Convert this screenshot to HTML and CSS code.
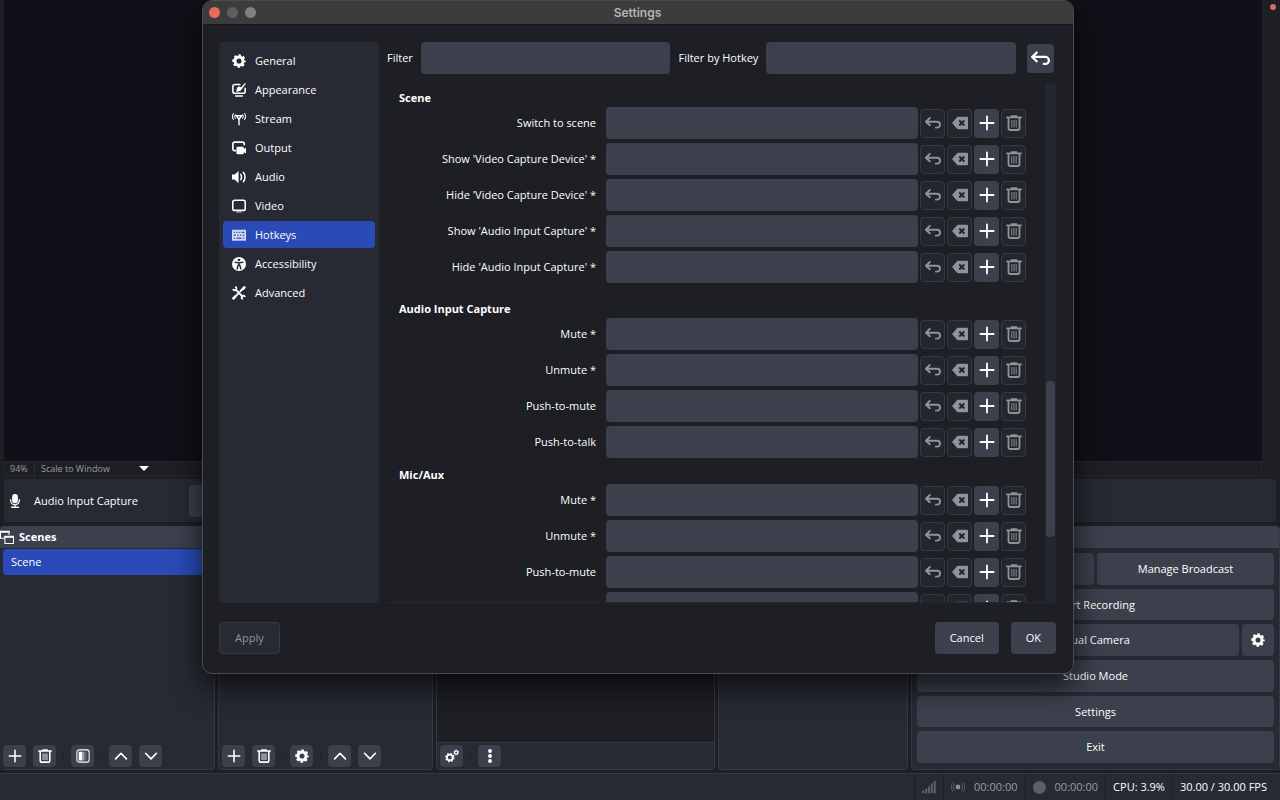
FILE: index.html
```html
<!DOCTYPE html>
<html lang="en">
  <head>
    <meta charset="UTF-8" />
    <meta name="viewport" content="width=device-width, initial-scale=1.0" />
    <title>Settings</title>
    <link rel="stylesheet" href="styles.css" />
  </head>
  <body>
    <!-- icon set -->
    <svg class="icon-defs" aria-hidden="true">
      <symbol id="i-gear" viewBox="0 0 16 16">
        <circle cx="8" cy="8" r="4.600" fill="none" stroke="currentColor" stroke-width="3.400" />
        <circle cx="8" cy="8" r="6.600" fill="none" stroke="currentColor" stroke-width="2.200" stroke-dasharray="2.900 2.283" stroke-dashoffset="1.450" />
      </symbol>
      <symbol id="i-appearance" viewBox="0 0 16 16">
        <path fill="none" stroke="currentColor" stroke-width="1.800" stroke-linecap="round" d="M9 1.700H3A2 2 0 0 0 1 3.700v6a2 2 0 0 0 2 2h10a2 2 0 0 0 2-2V6M4.200 14.800h7.600" />
        <path fill="currentColor" d="M16 .5 10.200 8.200 8.500 7 14.500.2zM8 4c2.400 0 3.200 1.700 2.600 3.500S7.500 10.500 4.300 9.900c1.300-.8.700-1.700 1.100-3.100S6.800 4 8 4z" />
      </symbol>
      <symbol id="i-stream" viewBox="0 0 16 16">
        <path fill="none" stroke="currentColor" stroke-width="1.200" stroke-linecap="round" d="M1.600 1.800a6 6 0 0 0 0 6.600M14.400 1.800a6 6 0 0 1 0 6.600M3.800 3.200a4 4 0 0 0 0 4M12.200 3.200a4 4 0 0 1 0 4" />
        <path fill="none" stroke="currentColor" stroke-width="1.600" d="M8 15V8M5 4.300h6L8 8.500z" />
      </symbol>
      <symbol id="i-output" viewBox="0 0 16 16">
        <path fill="none" stroke="currentColor" stroke-width="1.900" stroke-linecap="round" d="M4 11H3A2 2 0 0 1 1 9V3.200a2 2 0 0 1 2-2h9a2 2 0 0 1 2 2v1" />
        <path fill="currentColor" d="M6.300 6.500h5.900a1.200 1.200 0 0 1 1.200 1.200v1.500L16 7.700v6.600l-2.600-1.500v1.200a1.200 1.200 0 0 1-1.200 1.200H6.300A1.200 1.200 0 0 1 5.100 14V7.700a1.200 1.200 0 0 1 1.200-1.200z" />
      </symbol>
      <symbol id="i-audio" viewBox="0 0 16 16">
        <path fill="currentColor" d="M0 5.200h3L7.500 1v14L3 10.800H0z" />
        <path fill="none" stroke="currentColor" stroke-width="1.700" stroke-linecap="round" d="M10 5c1.100 1.700 1.100 4.300 0 6M13 2.600c2.500 3 2.500 7.800 0 10.800" />
      </symbol>
      <symbol id="i-video" viewBox="0 0 16 16">
        <rect x=".9" y="1.500" width="14.200" height="11.500" rx="2" fill="none" stroke="currentColor" stroke-width="1.800" />
        <path stroke="currentColor" stroke-width="1.500" opacity=".6" d="M5 14.900h6" />
      </symbol>
      <symbol id="i-keyboard" viewBox="0 0 16 16">
        <rect x="0" y="2" width="16" height="12.500" fill="currentColor" opacity=".8" />
        <path stroke="#2a4bb7" stroke-width="1.400" d="M2 5h1.500M5 5h1.500M8 5h1.500M11 5h3M2 8.200h2.500M6 8.200h1.500M9 8.200h1.500M12 8.200h2M2 11.500h1.500M5 11.500h6M12.500 11.500H14" />
      </symbol>
      <symbol id="i-access" viewBox="0 0 16 16">
        <circle cx="8" cy="8" r="8" fill="currentColor" />
        <circle cx="8" cy="3.400" r="1.500" fill="#272a33" />
        <path fill="none" stroke="#272a33" stroke-width="1.700" stroke-linecap="round" stroke-linejoin="round" d="M3.600 6 8 6.700l4.400-.7M8 7v2.500M5.900 13.500l1.300-4.500h1.600l1.300 4.500" />
      </symbol>
      <symbol id="i-tools" viewBox="0 0 16 16">
        <path fill="none" stroke="currentColor" stroke-width="2.200" stroke-linecap="round" d="M4.500 4.500 12 12M13.500 1.800 9.500 6M6.500 9.200 2 14" />
        <path fill="none" stroke="currentColor" stroke-width="2" d="M1 3.500c1 2 3.500 2 4-.2C5.200 2.300 4.600 1.300 3.700.8M15 12.500c-1-2-3.500-2-4 .2-.2 1 .4 2 1.300 2.500" />
        <path stroke="currentColor" stroke-width="2.800" d="m12.200 3.800 2.800-3.100M.8 15l3.400-3.400" />
      </symbol>
      <symbol id="i-undo" viewBox="0 0 16 16">
        <path fill="none" stroke="currentColor" stroke-width="1.900" stroke-linecap="round" stroke-linejoin="round" d="M4.800 3 .9 6.700l3.900 3.600M1.200 6.700h10.900a2.900 2.900 0 0 1 0 5.900h-1.300" />
      </symbol>
      <symbol id="i-clear" viewBox="0 0 16 16">
        <path fill="currentColor" d="M5.500 1.700H15a1 1 0 0 1 1 1v10.600a1 1 0 0 1-1 1H5.500L0 8z" />
        <path stroke="#20232a" stroke-width="1.900" d="m7.300 5.500 5 5M12.300 5.500l-5 5" />
      </symbol>
      <symbol id="i-plus" viewBox="0 0 16 16">
        <path stroke="currentColor" stroke-width="1.800" stroke-linecap="round" d="M8 1.400v13.200M1.400 8h13.200" />
      </symbol>
      <symbol id="i-trash" viewBox="0 0 16 16">
        <path fill="none" stroke="currentColor" stroke-width="1.800" stroke-linecap="round" d="M.9 2.300h14.200M5.500 1.200h5M2.500 3v10a2 2 0 0 0 2 2h7a2 2 0 0 0 2-2V3" />
        <path stroke="currentColor" stroke-width="1.200" opacity=".8" d="M5.800 5v7.500M8 5v7.500M10.200 5v7.500" />
      </symbol>
      <symbol id="i-filter" viewBox="0 0 16 16">
        <rect x="1" y="1" width="14" height="14" rx="2.500" fill="none" stroke="currentColor" stroke-width="1.200" />
        <path fill="currentColor" d="M3 3h4v10H3z" />
        <path fill="currentColor" opacity=".5" d="M7 3h2.500v10H7z" />
        <path fill="currentColor" opacity=".2" d="M9.500 3H12v10H9.500z" />
      </symbol>
      <symbol id="i-up" viewBox="0 0 16 16">
        <path fill="none" stroke="currentColor" stroke-width="1.900" stroke-linecap="round" stroke-linejoin="round" d="M1.800 11.300 8 4.900l6.200 6.400" />
      </symbol>
      <symbol id="i-down" viewBox="0 0 16 16">
        <path fill="none" stroke="currentColor" stroke-width="1.900" stroke-linecap="round" stroke-linejoin="round" d="M1.800 4.900 8 11.300l6.200-6.400" />
      </symbol>
      <symbol id="i-gears" viewBox="0 0 16 16">
        <circle cx="5.500" cy="9.800" r="3.300" fill="none" stroke="currentColor" stroke-width="2" />
        <circle cx="5.500" cy="9.800" r="4.700" fill="none" stroke="currentColor" stroke-width="1.500" stroke-dasharray="1.850 1.840" />
        <circle cx="12.800" cy="4" r="1.900" fill="none" stroke="currentColor" stroke-width="1.500" />
        <circle cx="12.800" cy="4" r="2.800" fill="none" stroke="currentColor" stroke-width="1" stroke-dasharray="1.100 1.100" />
      </symbol>
      <symbol id="i-dots" viewBox="0 0 16 16">
        <circle cx="8" cy="2.300" r="2.200" fill="currentColor" />
        <circle cx="8" cy="8" r="2.200" fill="currentColor" />
        <circle cx="8" cy="13.700" r="2.200" fill="currentColor" />
      </symbol>
      <symbol id="i-mic" viewBox="0 0 16 16">
        <rect x="4.700" y="0" width="6.600" height="10.500" rx="3.300" fill="currentColor" />
        <path fill="none" stroke="currentColor" stroke-width="1.400" d="M3 6v1.500a5 4.800 0 0 0 10 0V6M8 12v3" />
        <path stroke="currentColor" stroke-width="1.700" d="M3.500 15.200h9" />
      </symbol>
      <symbol id="i-windows" viewBox="0 0 16 16">
        <path fill="none" stroke="currentColor" stroke-width="1.200" d="M5 9.500H.6V1.600h9.800v4.200M5.600 7.600h9.800v7.800H5.600z" />
        <path stroke="currentColor" stroke-width="2.200" d="M0 2h11M5 7.800h11" />
      </symbol>
      <symbol id="i-signal" viewBox="0 0 16 16">
        <path stroke="currentColor" stroke-width="2.400" d="M1.300 15v-3M4.600 15v-5M7.900 15V7M11.200 15V4M14.600 15V1" />
      </symbol>
      <symbol id="i-live" viewBox="0 0 16 16">
        <circle cx="8" cy="8" r="2.800" fill="#8b8d94" />
        <path fill="none" stroke="currentColor" stroke-width="1.100" d="M4.300 4a5.500 5.500 0 0 0 0 8M11.700 4a5.500 5.500 0 0 1 0 8M2.300 2.600a8 8 0 0 0 0 10.800M13.700 2.600a8 8 0 0 1 0 10.800" />
      </symbol>
    </svg>

    <main class="app">
      <div class="preview-area">
        <div class="preview"></div>
        <div class="preview-side"><span class="rec-dot"></span></div>
      </div>
      <div class="zoom-bar">
        <span class="zoom-value">94%</span>
        <span class="zoom-mode">Scale to Window</span>
        <span class="caret"></span>
      </div>

      <div class="context-bar">
        <svg class="icon"><use href="#i-mic" /></svg>
        <span class="context-name">Audio Input Capture</span>
        <button class="context-btn" aria-label="Properties"></button>
      </div>

      <div class="docks">
        <section class="dock dock-scenes">
          <h2 class="dock-title"><svg class="icon"><use href="#i-windows" /></svg>Scenes</h2>
          <div class="dock-body"><div class="scene-item">Scene</div></div>
          <div class="toolbar">
            <button class="tool" aria-label="Add scene"><svg class="icon"><use href="#i-plus" /></svg></button>
            <button class="tool" aria-label="Remove scene"><svg class="icon"><use href="#i-trash" /></svg></button>
            <span class="tool-sep"></span>
            <button class="tool" aria-label="Scene filters"><svg class="icon"><use href="#i-filter" /></svg></button>
            <span class="tool-sep"></span>
            <button class="tool" aria-label="Move up"><svg class="icon"><use href="#i-up" /></svg></button>
            <button class="tool" aria-label="Move down"><svg class="icon"><use href="#i-down" /></svg></button>
          </div>
        </section>

        <section class="dock dock-sources">
          <h2 class="dock-title"></h2>
          <div class="dock-body"></div>
          <div class="toolbar">
            <button class="tool" aria-label="Add source"><svg class="icon"><use href="#i-plus" /></svg></button>
            <button class="tool" aria-label="Remove source"><svg class="icon"><use href="#i-trash" /></svg></button>
            <span class="tool-sep"></span>
            <button class="tool" aria-label="Source properties"><svg class="icon"><use href="#i-gear" /></svg></button>
            <span class="tool-sep"></span>
            <button class="tool" aria-label="Move up"><svg class="icon"><use href="#i-up" /></svg></button>
            <button class="tool" aria-label="Move down"><svg class="icon"><use href="#i-down" /></svg></button>
          </div>
        </section>

        <section class="dock dock-mixer">
          <h2 class="dock-title"></h2>
          <div class="dock-body dark"></div>
          <div class="toolbar bordered">
            <button class="tool" aria-label="Advanced audio"><svg class="icon"><use href="#i-gears" /></svg></button>
            <span class="tool-sep"></span>
            <button class="tool" aria-label="Mixer menu"><svg class="icon"><use href="#i-dots" /></svg></button>
          </div>
        </section>

        <section class="dock dock-transitions">
          <h2 class="dock-title"></h2>
          <div class="dock-body"></div>
        </section>

        <section class="dock dock-controls">
          <h2 class="dock-title"></h2>
          <div class="controls">
            <div class="control-row">
              <button class="btn">Start Streaming</button>
              <button class="btn">Manage Broadcast</button>
            </div>
            <button class="btn">Start Recording</button>
            <div class="control-row">
              <button class="btn">Start Virtual Camera</button>
              <button class="btn btn-square" aria-label="Virtual camera settings"><svg class="icon"><use href="#i-gear" /></svg></button>
            </div>
            <button class="btn">Studio Mode</button>
            <button class="btn">Settings</button>
            <button class="btn">Exit</button>
          </div>
        </section>
      </div>

      <footer class="status-bar">
        <div class="status dim"><svg class="icon"><use href="#i-signal" /></svg></div>
        <div class="status dim"><svg class="icon"><use href="#i-live" /></svg><span class="time">00:00:00</span></div>
        <div class="status dim"><span class="record-dot"></span><span class="time">00:00:00</span></div>
        <div class="status">CPU: 3.9%</div>
        <div class="status fps">30.00 / 30.00 FPS</div>
      </footer>
    </main>

    <div class="dialog" role="dialog" aria-labelledby="dialog-title">
      <header class="titlebar">
        <div class="lights">
          <span class="light close"></span>
          <span class="light minimize"></span>
          <span class="light zoom"></span>
        </div>
        <h1 id="dialog-title">Settings</h1>
      </header>

      <div class="dialog-body">
        <nav class="sidebar">
          <a class="nav-item" href="#"><svg class="icon"><use href="#i-gear" /></svg>General</a>
          <a class="nav-item" href="#"><svg class="icon"><use href="#i-appearance" /></svg>Appearance</a>
          <a class="nav-item" href="#"><svg class="icon"><use href="#i-stream" /></svg>Stream</a>
          <a class="nav-item" href="#"><svg class="icon"><use href="#i-output" /></svg>Output</a>
          <a class="nav-item" href="#"><svg class="icon"><use href="#i-audio" /></svg>Audio</a>
          <a class="nav-item" href="#"><svg class="icon"><use href="#i-video" /></svg>Video</a>
          <a class="nav-item active" href="#"><svg class="icon"><use href="#i-keyboard" /></svg>Hotkeys</a>
          <a class="nav-item" href="#"><svg class="icon"><use href="#i-access" /></svg>Accessibility</a>
          <a class="nav-item" href="#"><svg class="icon"><use href="#i-tools" /></svg>Advanced</a>
        </nav>

        <div class="page">
          <div class="filters">
            <label for="filter">Filter</label>
            <input class="field" type="text" id="filter" />
            <label for="filter-hotkey">Filter by Hotkey</label>
            <input class="field" type="text" id="filter-hotkey" />
            <button class="key-btn reset" aria-label="Reset filter"><svg class="icon icon-lg"><use href="#i-undo" /></svg></button>
          </div>
          <div class="scroll-area">
            <div class="hotkeys" id="hotkeys"></div>
            <div class="scrollbar"><div class="thumb"></div></div>
          </div>
        </div>
      </div>

      <div class="dialog-footer">
        <button class="btn" disabled>Apply</button>
        <span class="spacer"></span>
        <button class="btn">Cancel</button>
        <button class="btn">OK</button>
      </div>
    </div>

    <script>
      const groups = [
        {
          title: "Scene",
          spaced: true,
          keys: [
            "Switch to scene",
            "Show 'Video Capture Device' *",
            "Hide 'Video Capture Device' *",
            "Show 'Audio Input Capture' *",
            "Hide 'Audio Input Capture' *",
          ],
        },
        {
          title: "Audio Input Capture",
          keys: ["Mute *", "Unmute *", "Push-to-mute", "Push-to-talk"],
        },
        {
          title: "Mic/Aux",
          keys: ["Mute *", "Unmute *", "Push-to-mute", ""],
        },
      ];

      const keyButton = (icon, label, disabled) => `
        <button class="key-btn" aria-label="${label}" ${disabled ? "disabled" : ""}>
          <svg class="icon icon-lg"><use href="#i-${icon}" /></svg>
        </button>`;

      document.getElementById("hotkeys").innerHTML = groups
        .map(
          (group, g) => `
          <section class="group ${group.spaced ? "spaced" : ""}">
            <h2 class="group-title">${group.title}</h2>
            ${group.keys
              .map(
                (name, k) => `
                <div class="hotkey">
                  <label for="key-${g}-${k}">${name}</label>
                  <input class="field" type="text" id="key-${g}-${k}" />
                  ${keyButton("undo", "Revert", true)}
                  ${keyButton("clear", "Clear", true)}
                  ${keyButton("plus", "Add", false)}
                  ${keyButton("trash", "Remove", true)}
                </div>`
              )
              .join("")}
          </section>`
        )
        .join("");
    </script>
  </body>
</html>
```

FILE: styles.css
```css
* {
  box-sizing: border-box;
  margin: 0;
  padding: 0;
}

body {
  position: relative;
  height: 100vh;
  overflow: hidden;
  background: #1d1f25;
  color: #fefefe;
  font-family: "Open Sans", "Noto Sans", sans-serif;
  font-size: 11px;
  line-height: 16px;
}

button,
input {
  font: inherit;
  color: inherit;
  border: none;
  outline: none;
}

.icon-defs {
  display: none;
}

.icon {
  width: 14px;
  height: 14px;
  flex: none;
}

.icon-lg {
  width: 16px;
  height: 16px;
}

/* main window */
.app {
  display: flex;
  flex-direction: column;
  height: 100vh;
}

.preview-area {
  flex: 1;
  display: flex;
  padding-left: 4px;
}

.preview {
  flex: 1;
  background: #101118;
}

.preview-side {
  width: 18px;
  border-left: 1px solid #23252c;
  padding: 4px 4px;
  text-align: right;
  line-height: 0;
}

.rec-dot {
  display: inline-block;
  width: 6px;
  height: 6px;
  border-radius: 50%;
  background: #d0706a;
}

.zoom-bar {
  display: flex;
  align-items: center;
  height: 15px;
  margin: 0 18px 3px 4px;
  border: 1px solid #24262d;
  color: #9a9ba0;
  font-size: 9px;
}

.zoom-value {
  width: 30px;
  padding-left: 5px;
  border-right: 1px solid #2c2e36;
}

.zoom-mode {
  width: 104px;
  padding-left: 6px;
}

.caret {
  border: 5px solid transparent;
  border-top-color: #fefefe;
  border-bottom: none;
}

.context-bar {
  display: flex;
  align-items: center;
  height: 43px;
  margin: 0 4px 4px;
  padding-left: 4px;
  border-radius: 4px;
  background: #272a33;
}

.context-name {
  width: 155px;
  margin-left: 12px;
}

.context-btn {
  width: 60px;
  height: 32px;
  border-radius: 4px;
  background: #3c404d;
}

.docks {
  display: flex;
  gap: 3px;
  height: 244px;
}

.dock {
  display: flex;
  flex-direction: column;
  border: 1px solid #363943;
  border-top: none;
  border-radius: 4px;
  background: #272a33;
  overflow: hidden;
}

.dock-scenes {
  width: 215px;
  border-left: none;
}

.dock-sources {
  width: 215px;
}

.dock-mixer {
  flex: 1;
}

.dock-transitions {
  width: 190px;
}

.dock-controls {
  width: 369px;
}

.dock-title {
  display: flex;
  align-items: center;
  gap: 5px;
  height: 22px;
  flex: none;
  background: #3c404d;
  font-size: 11px;
}

.dock-body {
  flex: 1;
  padding: 1px 1px 1px 3px;
}

.dock-body.dark {
  background: #1d1f25;
}

.scene-item {
  padding: 5px 8px;
  border-radius: 4px;
  background: #2a4bb7;
}

.toolbar {
  display: flex;
  align-items: center;
  gap: 7px;
  height: 27px;
  padding: 0 3px;
}

.toolbar.bordered {
  border-top: 1px solid #363943;
}

.tool {
  display: flex;
  align-items: center;
  justify-content: center;
  width: 23px;
  height: 22px;
  border-radius: 4px;
  background: #3c404d;
}

.tool-sep {
  width: 1px;
  height: 14px;
  background: #22242c;
}

.controls {
  flex: 1;
  display: flex;
  flex-direction: column;
  gap: 4px;
  padding: 5px 5px 6px;
}

.control-row {
  flex: 1;
  display: flex;
  gap: 3px;
}

.btn {
  flex: 1;
  border-radius: 4px;
  background: #3c404d;
}

.btn-square {
  flex: none;
  display: flex;
  align-items: center;
  justify-content: center;
  width: 32px;
}

.status-bar {
  display: flex;
  justify-content: flex-end;
  height: 27px;
  margin-top: 3px;
  border-top: 1px solid #363943;
  background: #272a33;
}

.status {
  display: flex;
  align-items: center;
  gap: 9px;
  padding: 0 7px;
  border-left: 1px solid #1d1f25;
}

.status.dim {
  color: #5c5f69;
}

.status.fps {
  padding-right: 13px;
}

.time {
  color: #9a9ba0;
}

.record-dot {
  width: 13px;
  height: 13px;
  border-radius: 50%;
  background: #5c5f69;
}

/* settings window */
.dialog {
  position: absolute;
  inset: 0 206px 126px 202px;
  display: flex;
  flex-direction: column;
  border: 1px solid #4a4b50;
  border-radius: 10px;
  background: #1d1f25;
  box-shadow: 0 12px 30px rgba(0, 0, 0, 0.7);
  overflow: hidden;
}

.titlebar {
  display: flex;
  align-items: center;
  height: 24px;
  padding: 0 6px;
  flex: none;
  border-bottom: 1px solid #17181c;
  background: #3c3c3c;
}

.titlebar h1 {
  flex: 1;
  padding-right: 48px;
  text-align: center;
  font-size: 12px;
  font-family: Inter, sans-serif;
  font-weight: 600;
  color: #b4b4b4;
}

.lights {
  display: flex;
  gap: 7px;
}

.light {
  width: 11px;
  height: 11px;
  border-radius: 50%;
}

.close {
  background: #ec6a5c;
}

.minimize {
  background: #5e5e60;
}

.zoom {
  background: #808080;
}

.dialog-body {
  flex: 1;
  display: flex;
  gap: 8px;
  min-height: 0;
  padding: 17px 17px 0 16px;
}

.sidebar {
  display: flex;
  flex-direction: column;
  gap: 2px;
  width: 160px;
  padding: 5px 4px;
  border-radius: 4px;
  background: #272a33;
}

.nav-item {
  display: flex;
  align-items: center;
  gap: 9px;
  height: 27px;
  padding-left: 9px;
  border-radius: 4px;
  color: inherit;
  text-decoration: none;
}

.nav-item.active {
  background: #2a4bb7;
}

.page {
  flex: 1;
  display: flex;
  flex-direction: column;
  min-width: 0;
}

.filters {
  display: flex;
  align-items: center;
  gap: 8px;
}

.filters .field {
  flex: 1;
}

.field {
  min-width: 0;
  height: 32px;
  padding: 0 8px;
  border-radius: 4px;
  background: #3c404d;
}

.key-btn {
  display: flex;
  align-items: center;
  justify-content: center;
  width: 25px;
  height: 29px;
  border-radius: 4px;
  background: #3c404d;
}

.key-btn:disabled {
  border: 1px solid #363943;
  background: #23262d;
  color: #929399;
}

.key-btn.reset {
  width: 27px;
  margin: 0 2px 0 3px;
}

.key-btn.reset .icon {
  width: 19px;
  height: 19px;
}

.scroll-area {
  flex: 1;
  display: flex;
  min-height: 0;
  margin-top: 9px;
  border-bottom: 1px solid #262930;
}

.hotkeys {
  flex: 1;
  padding: 7px 19px 0 12px;
  overflow: hidden;
}

.group {
  display: flex;
  flex-direction: column;
  gap: 4px;
  margin-bottom: 9px;
}

.group.spaced {
  margin-bottom: 18px;
}

.group-title {
  height: 13px;
  font-size: 11px;
}

.hotkey {
  display: flex;
  align-items: center;
  gap: 2px;
}

.hotkey label {
  width: 197px;
  margin-right: 8px;
  text-align: right;
}

.hotkey .field {
  flex: 1;
}

.scrollbar {
  width: 11px;
  padding: 0 1px;
  border-radius: 4px;
  background: #23262e;
}

.thumb {
  height: 30%;
  margin-top: 298px;
  border-radius: 4px;
  background: #3c404d;
}

.dialog-footer {
  display: flex;
  gap: 12px;
  padding: 19px 17px 19px 16px;
}

.dialog-footer .btn {
  flex: none;
  height: 32px;
  padding: 0 15px;
}

.dialog-footer .btn:disabled {
  border: 1px solid #363943;
  background: #272a33;
  color: #929399;
}

.spacer {
  flex: 1;
}
```
